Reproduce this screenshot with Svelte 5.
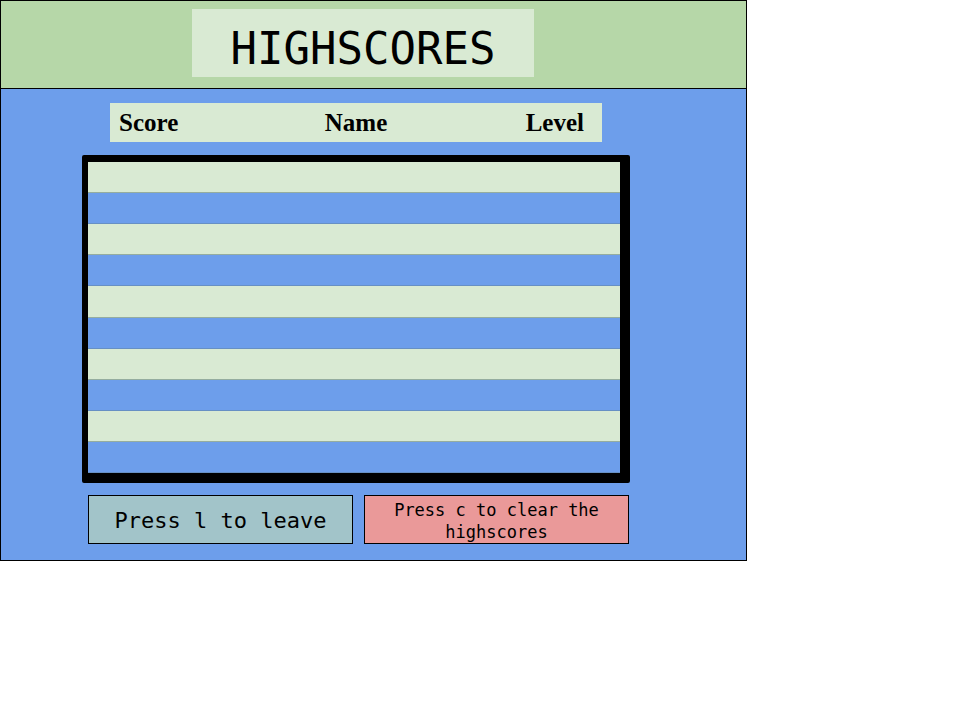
<script>
  const columns = ['Score', 'Name', 'Level'];
  let rows = $state(Array.from({ length: 10 }, () => ['', '', '']));

  function clearScores() {
    rows = rows.map(() => ['', '', '']);
  }

  function leave() {
    history.back();
  }

  function onkeydown(event) {
    if (event.key === 'l') leave();
    if (event.key === 'c') clearScores();
  }
</script>

<svelte:window {onkeydown} />

<main class="screen">
  <header class="banner">
    <h1>HIGHSCORES</h1>
  </header>

  <div class="content">
    <table>
      <thead>
        <tr>
          {#each columns as column}
            <th scope="col">{column}</th>
          {/each}
        </tr>
      </thead>
      <tbody>
        {#each rows as row}
          <tr>
            {#each row as cell}
              <td>{cell}</td>
            {/each}
          </tr>
        {/each}
      </tbody>
    </table>

    <div class="actions">
      <button class="leave" onclick={leave}>Press l to leave</button>
      <button class="clear" onclick={clearScores}>Press c to clear the highscores</button>
    </div>
  </div>
</main>

<style>
  :global(body) {
    margin: 0;
    background: #ffffff;
  }

  .screen,
  .screen * {
    box-sizing: border-box;
  }

  .screen {
    width: 100%;
    max-width: 747px;
    border: 1px solid #000000;
    background: #6d9eeb;
    color: #000000;
  }

  .banner {
    padding: 8px 212px 11px 191px;
    border-bottom: 1px solid #000000;
    background: #b6d7a8;
  }

  h1 {
    margin: 0;
    padding: 14px 0 2px;
    background: #d9ead3;
    font: 400 44px/52px "DejaVu Sans Mono", monospace;
    text-align: center;
  }

  .content {
    padding: 14px 116px 16px 81px;
  }

  table,
  thead,
  tbody {
    display: block;
  }

  thead {
    margin: 0 28px 13px;
    background: #d9ead3;
  }

  thead tr {
    display: grid;
    grid-template-columns: 1fr auto 1fr;
    padding: 0 9px;
  }

  th {
    padding: 0;
    font: 700 25px/39px "Liberation Serif", serif;
    text-align: left;
  }

  th:last-child {
    padding-right: 9px;
    text-align: right;
  }

  tbody {
    display: grid;
    grid-template-rows: repeat(10, 1fr);
    height: 328px;
    border: solid #000000;
    border-width: 7px 10px 10px 6px;
    border-radius: 2px;
  }

  tbody tr {
    display: grid;
    grid-template-columns: repeat(3, 1fr);
    border-bottom: 1px solid #6790c4;
  }

  tbody tr:nth-child(odd) {
    border-bottom-color: #95ad9f;
    background: #d9ead3;
  }

  td {
    padding: 0;
  }

  .actions {
    display: flex;
    gap: 11px;
    padding: 12px 1px 0 6px;
  }

  button {
    flex: 1 1 0;
    height: 49px;
    margin: 0;
    padding: 3px 16px 0;
    border: 1px solid #000000;
    border-radius: 0;
    color: #000000;
    font: 400 22px/22px "DejaVu Sans Mono", monospace;
    cursor: pointer;
  }

  .leave {
    background: #a2c4c9;
  }

  .clear {
    background: #ea9999;
    font-size: 17px;
  }
</style>
